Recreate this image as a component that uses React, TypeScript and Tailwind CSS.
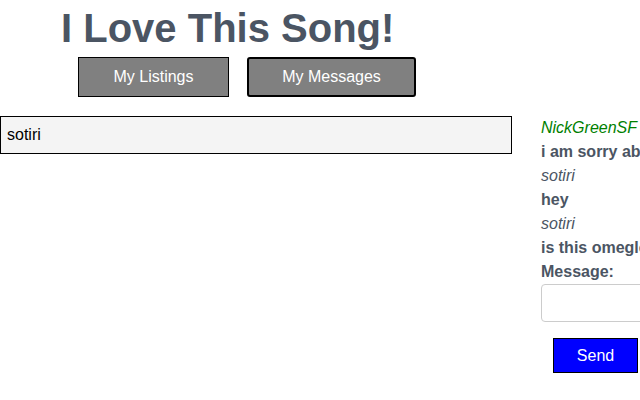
const messages = [
  { from: 'NickGreenSF', text: 'i am sorry about that', mine: true },
  { from: 'sotiri', text: 'hey', mine: false },
  { from: 'sotiri', text: 'is this omegle?', mine: false },
]

export default function App() {
  return (
    <div className="w-[640px] h-[400px] overflow-hidden bg-white text-[#4b5563] font-['Liberation_Sans',Arial,sans-serif]">
      {/* Header */}
      <h1 className="pt-[5px] pl-[61px] text-[40px] leading-[46px] font-bold whitespace-nowrap">I Love This Song!</h1>
      <div className="mt-[6px] flex gap-[18px] pl-[78px]">
        <button className="h-[40px] w-[151px] border border-black bg-[#808080] text-[16px] text-white">My Listings</button>
        <button className="h-[40px] w-[169px] rounded-[3px] border-2 border-black bg-[#808080] text-[16px] text-white">My Messages</button>
      </div>

      <div className="mt-[19px] flex">
        {/* Conversations */}
        <div className="w-[512px] shrink-0">
          <div className="flex h-[38px] items-center border border-black bg-[#f4f4f4] pl-[6px] text-[16px] text-black">sotiri</div>
        </div>

        {/* Chat */}
        <div className="ml-[29px] w-[260px] shrink-0 text-[16px] leading-[24px] whitespace-nowrap">
          {messages.map((m, i) => (
            <div key={i}>
              <div className={`italic ${m.mine ? 'text-[#008000]' : 'text-[#4b5563]'}`}>{m.from}</div>
              <div className="font-bold">{m.text}</div>
            </div>
          ))}
          <div className="font-bold">Message:</div>
          <input className="block h-[38px] w-[200px] rounded-[4px] border border-[#ccc] bg-white px-2" />
          <button className="mt-[16px] ml-[12px] h-[35px] w-[85px] border border-black bg-[#0000ff] text-[16px] text-white">Send</button>
        </div>
      </div>
    </div>
  )
}
